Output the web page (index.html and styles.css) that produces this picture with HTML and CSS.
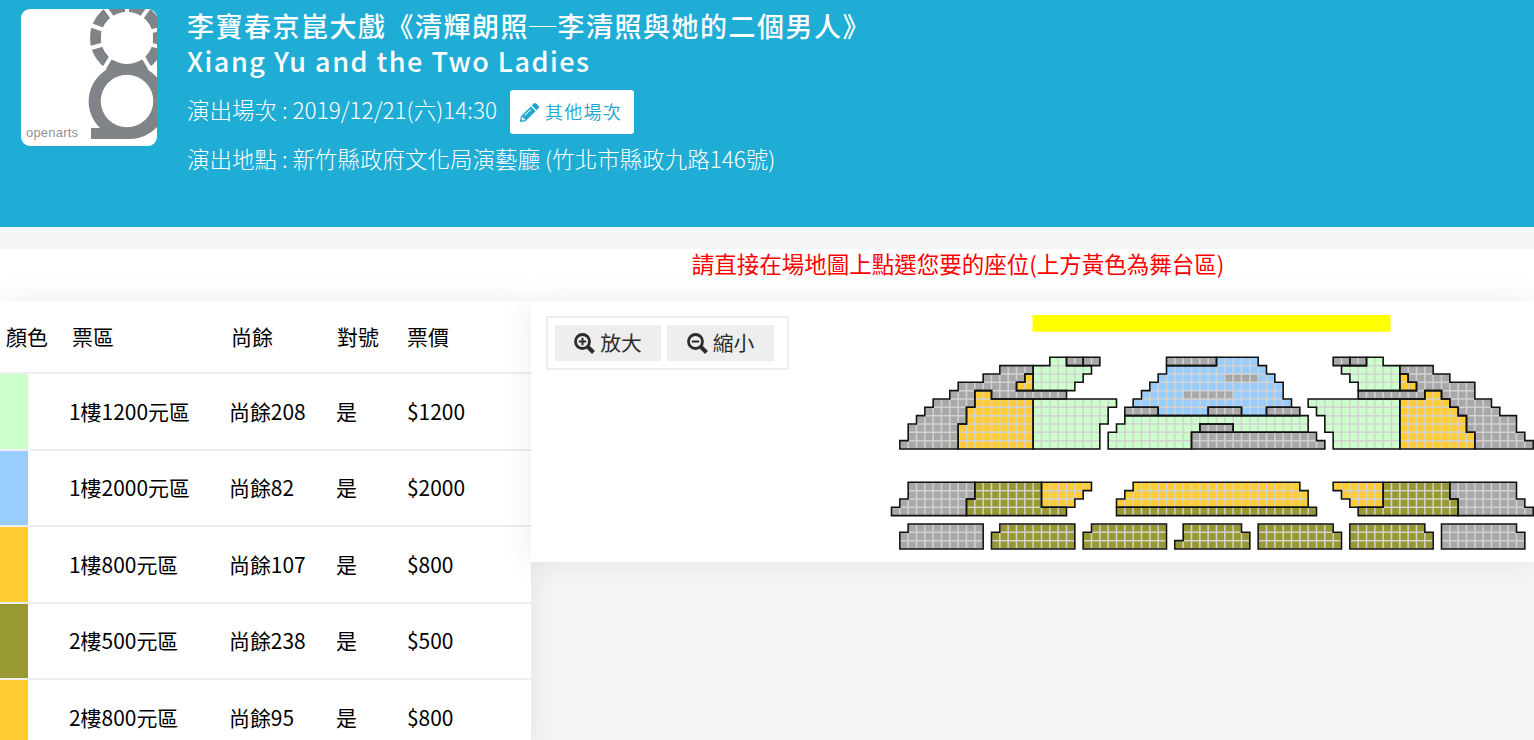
FILE: index.html
```html
<!DOCTYPE html>
<html lang="zh-Hant">
<head>
    <meta charset="UTF-8">
    <meta name="viewport" content="width=device-width, initial-scale=1.0">
    <title>李寶春京崑大戲</title>
    <link rel="stylesheet" href="styles.css">
</head>
<body>
    <header class="event-header">
        <svg class="event-logo" viewBox="0 0 136 137">
            <rect width="136" height="137" fill="#fff"></rect>
            <circle cx="106" cy="29" r="31.5" fill="none" stroke="#808387" stroke-width="11"></circle>
            <g stroke="#fff" stroke-width="4">
                <line x1="106" y1="29" x2="106" y2="-12"></line>
                <line x1="106" y1="29" x2="80" y2="-7"></line>
                <line x1="106" y1="29" x2="66" y2="15"></line>
                <line x1="106" y1="29" x2="66" y2="40"></line>
                <line x1="106" y1="29" x2="132" y2="-7"></line>
                <line x1="106" y1="29" x2="146" y2="18"></line>
                <line x1="106" y1="29" x2="146" y2="40"></line>
                <line x1="90" y1="48" x2="82" y2="61"></line>
                <line x1="122" y1="48" x2="130" y2="61"></line>
            </g>
            <path d="M90.500 51 L85 61 A37 37 0 0 0 79 119 H70 V130 H106 A37 37 0 0 0 127 61 L121.500 51 Z" fill="#808387"></path>
            <circle cx="106" cy="92" r="26.3" fill="#fff"></circle>
            <circle cx="106" cy="29" r="26" fill="#fff"></circle>
            <text class="logo-text" x="5" y="128" textLength="52">openarts</text>
        </svg>
        <div class="event-info">
            <h1 class="event-title">
                <span>李寶春京崑大戲《清輝朗照─李清照與她的二個男人》</span>
                <span>Xiang Yu and the Two Ladies</span>
            </h1>
            <div class="event-row">
                <span class="event-text">演出場次 : 2019/12/21(六)14:30</span>
                <a class="other-button">
                    <svg width="19" height="19" viewBox="0 0 512 512" fill="currentColor">
                        <path d="M498 142l-46 46c-5 5-12 5-17 0L324 77c-5-5-5-12 0-17l46-46c19-19 49-19 68 0l60 60c19 19 19 49 0 68zM284 100L22 362 0 484c-3 16 11 30 28 28l121-22 262-262c5-5 5-12 0-17L301 100c-5-5-12-5-17 0zM124 340c-5-5-5-13 0-18l154-154c5-5 13-5 18 0s5 13 0 18L142 340c-5 5-13 5-18 0zM88 424h48v36l-64 12-32-32 12-64h36z"></path>
                    </svg>
                    <span class="button-text">其他場次</span>
                </a>
            </div>
            <div class="event-row">
                <span class="event-text">演出地點 : 新竹縣政府文化局演藝廳 (竹北市縣政九路146號)</span>
            </div>
        </div>
    </header>

    <div class="notice">請直接在場地圖上點選您要的座位(上方黃色為舞台區)</div>

    <main class="content">
        <table class="area-table">
            <thead>
                <tr><th>顏色</th><th>票區</th><th>尚餘</th><th>對號</th><th>票價</th></tr>
            </thead>
            <tbody>
                <tr><td><i class="swatch green"></i></td><td>1樓1200元區</td><td>尚餘208</td><td>是</td><td>$1200</td></tr>
                <tr><td><i class="swatch blue"></i></td><td>1樓2000元區</td><td>尚餘82</td><td>是</td><td>$2000</td></tr>
                <tr><td><i class="swatch orange"></i></td><td>1樓800元區</td><td>尚餘107</td><td>是</td><td>$800</td></tr>
                <tr><td><i class="swatch olive"></i></td><td>2樓500元區</td><td>尚餘238</td><td>是</td><td>$500</td></tr>
                <tr><td><i class="swatch orange"></i></td><td>2樓800元區</td><td>尚餘95</td><td>是</td><td>$800</td></tr>
            </tbody>
        </table>

        <section class="map-panel">
            <div class="zoom-box">
                <button class="zoom-button">
                    <svg width="21" height="21" viewBox="0 0 21 21" fill="none" stroke="currentColor">
                        <circle cx="8.5" cy="8.5" r="7" stroke-width="2.8"></circle>
                        <path d="M14 14l5.5 5.5" stroke-width="4"></path>
                        <path d="M4.800 8.500h7.400M8.500 4.800v7.400" stroke-width="2"></path>
                    </svg>
                    <span class="button-text">放大</span>
                </button>
                <button class="zoom-button">
                    <svg width="21" height="21" viewBox="0 0 21 21" fill="none" stroke="currentColor">
                        <circle cx="8.5" cy="8.5" r="7" stroke-width="2.8"></circle>
                        <path d="M14 14l5.5 5.5" stroke-width="4"></path>
                        <path d="M4.800 8.500h7.400" stroke-width="2"></path>
                    </svg>
                    <span class="button-text">縮小</span>
                </button>
            </div>
            <svg class="seat-map" width="644" height="240" viewBox="0 0 644 240">
                <rect x="142.5" y="0" width="358" height="16.7" fill="#ff0"></rect>
                <g id="seats" transform="translate(1.500 42.300) scale(8.3333)"></g>
            </svg>
        </section>
    </main>

    <script src="script.js"></script>
</body>
</html>
```
FILE: styles.css
```css
body {
    margin: 0;
    height: 740px;
    overflow: hidden;
    background-color: #f5f5f5;
    font-family: "Noto Sans CJK TC", "Noto Sans", sans-serif;
    color: #000;
}

.event-header {
    display: flex;
    box-sizing: border-box;
    height: 227px;
    padding: 9px 21px;
    background-color: #20add5;
    color: #fff;
}

.event-logo {
    width: 136px;
    height: 137px;
    margin-right: 30px;
    border-radius: 9px;
    flex-shrink: 0;
}

.logo-text {
    font-family: "Liberation Sans", sans-serif;
    font-size: 13px;
    fill: #909296;
}

.event-title {
    margin: -1px 0 12px;
    font-size: 27px;
    line-height: 35px;
    font-weight: 500;
    letter-spacing: 1.5px;
}

.event-title span {
    display: block;
}

.event-row {
    display: flex;
    align-items: center;
    height: 44px;
    margin-bottom: 5px;
    font-size: 22.5px;
    font-weight: 300;
    white-space: nowrap;
}

.event-text {
    padding-bottom: 6px;
}

.other-button {
    display: flex;
    align-items: center;
    box-sizing: border-box;
    width: 124px;
    height: 44px;
    margin-left: 13px;
    padding-left: 10px;
    gap: 6px;
    border-radius: 3px;
    background-color: #fff;
    color: #20a5d0;
    font-size: 18px;
    font-weight: 350;
    letter-spacing: 1.2px;
}

.button-text {
    padding-bottom: 2px;
}

.notice {
    height: 52px;
    margin-top: 22px;
    padding-left: 382px;
    background-color: #fff;
    color: #f00;
    font-size: 22.5px;
    line-height: 29px;
    text-align: center;
}

.content {
    display: flex;
    align-items: flex-start;
}

.area-table {
    width: 531px;
    flex-shrink: 0;
    table-layout: fixed;
    border-collapse: separate;
    border-spacing: 0;
    background-color: #fff;
    box-shadow: 0 0 30px rgba(0, 0, 0, 0.08);
    font-size: 20.95px;
}

.area-table th,
.area-table td {
    box-sizing: border-box;
    height: 77px;
    padding: 0 0 2px;
    border-bottom: 2px solid #eee;
    font-weight: 400;
    text-align: left;
    white-space: nowrap;
}

.area-table tr:nth-child(even) td {
    height: 76px;
}

.area-table td:first-child {
    padding: 0;
}

.area-table th {
    height: 73px;
}

.area-table th:nth-child(1) { width: 69px; padding-left: 6px; }
.area-table th:nth-child(2) { width: 160px; padding-left: 3px; }
.area-table th:nth-child(3) { width: 107px; padding-left: 2px; }
.area-table th:nth-child(4) { width: 71px; padding-left: 1px; }

.swatch {
    display: block;
    width: 28px;
    height: 75px;
}

.area-table tr:nth-child(even) .swatch {
    height: 74px;
}

.green { background-color: #cfc; fill: #cfc; }
.blue { background-color: #9cf; fill: #9cf; }
.orange { background-color: #fc3; fill: #fc3; }
.olive { background-color: #993; fill: #993; }
.gray { fill: #a8a8a8; }

.map-panel {
    position: relative;
    display: flex;
    justify-content: space-between;
    align-items: flex-start;
    box-sizing: border-box;
    width: 1003px;
    height: 261px;
    padding: 14px 0 0 15px;
    background-color: #fff;
    box-shadow: 0 0 30px rgba(0, 0, 0, 0.08);
}

.zoom-box {
    display: flex;
    gap: 6px;
    box-sizing: border-box;
    width: 243px;
    height: 54px;
    margin-top: 1px;
    padding: 7px;
    border: 2px solid #eee;
}

.zoom-button {
    display: flex;
    align-items: center;
    justify-content: center;
    gap: 5px;
    width: 106px;
    height: 36px;
    padding: 0;
    border: none;
    background-color: #eee;
    color: #2c2c2c;
    font-family: inherit;
    font-size: 20.8px;
}

.zoom-button:last-child {
    width: 107px;
}

.grid-line {
    fill: none;
    stroke: #d2d2d2;
    stroke-width: 0.18;
}

.outline {
    fill: none;
    stroke: #111;
    stroke-width: 0.19;
}
```
FILE: script.js
```js
// one unit = one seat
const areas = [
    // 1F left
    ['gray', 'M1 11V10H2V8H3V7H4V6H5V5H7V4H8V3H11V2H13V1H17V2H16V3H15V4H21V5H12V4H10V6H9V8H8V11Z'],
    ['orange', 'M16 2H17V4H15V3H16Z'],
    ['orange', 'M10 4H12V5H17V11H8V8H9V6H10Z'],
    ['green', 'M17 1H19V0H21V1H24V2H23V3H22V4H17Z'],
    ['gray', 'M21 0H23V1H21Z'],
    ['gray', 'M23 0H25V1H23Z'],
    ['green', 'M17 5H27V6H26V8H25V11H17Z'],
    // 1F center
    ['blue', 'M39 0H44V1H45V2H46V3H47V5H48V6H45V7H42V6H38V7H32V6H29V5H30V4H31V3H32V2H33V1H39Z'],
    ['gray', 'M33 0H39V1H33Z'],
    ['gray', 'M28 6H32V7H28Z'],
    ['gray', 'M38 6H42V7H38Z'],
    ['gray', 'M45 6H49V7H45Z'],
    ['green', 'M28 7H50V9H41V8H37V9H36V11H26V9H27V8H28Z'],
    ['gray', 'M37 8H41V9H37Z'],
    ['gray', 'M36 9H51V10H52V11H36Z'],
    // 1F right
    ['gray', 'M53 0H55V1H53Z'],
    ['gray', 'M55 0H57V1H55Z'],
    ['green', 'M57 0H59V1H61V4H56V3H55V2H54V1H57Z'],
    ['gray', 'M61 1H65V2H67V3H70V5H72V6H73V7H75V9H76V10H77V11H70V9H69V7H68V6H67V5H66V4H64V5H56V4H63V3H62V2H61Z'],
    ['orange', 'M61 2H62V3H63V4H61Z'],
    ['orange', 'M64 4H66V5H67V6H68V7H69V9H70V11H61V5H64Z'],
    ['green', 'M50 5H61V11H53V9H52V7H51V6H50Z'],
    // 2F front
    ['gray', 'M0 19V18H1V17H2V15H10V17H9V19Z'],
    ['olive', 'M10 15H18V18H21V19H9V17H10Z'],
    ['orange', 'M18 15H24V16H23V17H22V18H18Z'],
    ['orange', 'M29 15H49V16H50V18H27V17H28V16H29Z'],
    ['olive', 'M27 18H51V19H27Z'],
    ['orange', 'M53 15H59V18H55V17H54V16H53Z'],
    ['olive', 'M59 15H67V17H68V19H56V18H59Z'],
    ['gray', 'M67 15H75V17H76V18H77V19H68V17H67Z'],
    // 2F back
    ['gray', 'M2 20H11V23H1V21H2Z'],
    ['olive', 'M13 20H22V23H12V21H13Z'],
    ['olive', 'M24 20H33V23H23V21H24Z'],
    ['olive', 'M35 20H42V21H43V23H34V22H35Z'],
    ['olive', 'M44 20H53V21H54V23H44Z'],
    ['olive', 'M55 20H64V21H65V23H55Z'],
    ['gray', 'M66 20H75V21H76V23H66Z']
];

// sold seats inside an area, drawn without an outline
const sold = 'M40 2H44V3H40ZM35 4H41V5H35Z';

const seats = document.getElementById('seats');

function add(parent, tag, attrs) {
    const el = document.createElementNS('http://www.w3.org/2000/svg', tag);
    for (const key in attrs) el.setAttribute(key, attrs[key]);
    parent.appendChild(el);
    return el;
}

const clip = add(seats, 'clipPath', { id: 'seat-clip' });
add(clip, 'path', { d: areas.map(a => a[1]).join('') });

areas.forEach(([color, d]) => add(seats, 'path', { class: color, d: d }));
add(seats, 'path', { class: 'gray', d: sold });

let lines = '';
for (let x = 0; x <= 77; x++) lines += `M${x} 0V23`;
for (let y = 0; y <= 23; y++) lines += `M0 ${y}H77`;
add(seats, 'path', { class: 'grid-line', d: lines, 'clip-path': 'url(#seat-clip)' });

areas.forEach(([, d]) => add(seats, 'path', { class: 'outline', d: d }));
```
